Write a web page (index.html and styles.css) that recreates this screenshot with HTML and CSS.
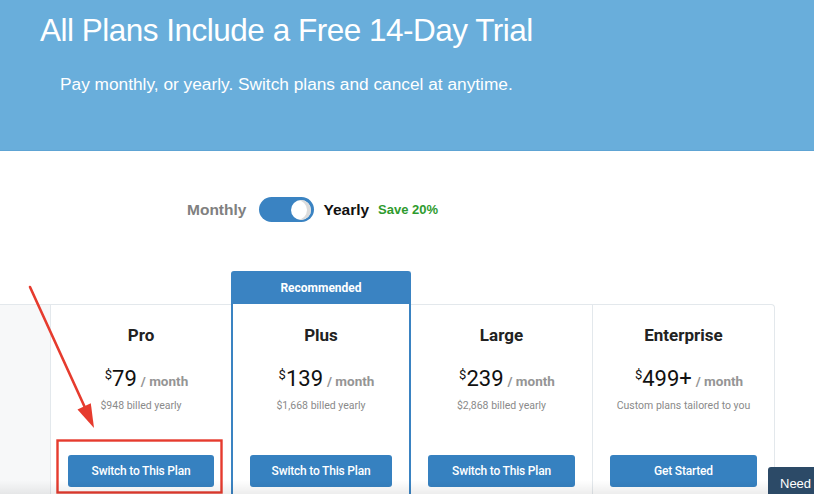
FILE: index.html
```html
<!DOCTYPE html>
<html lang="en">
<head>
<meta charset="utf-8">
<title>Pricing</title>
<link rel="stylesheet" href="styles.css">
</head>
<body>
<header class="hero">
  <h1 class="hero-title">All Plans Include a Free 14-Day Trial</h1>
  <p class="hero-sub">Pay monthly, or yearly. Switch plans and cancel at anytime.</p>
</header>

<section class="billing">
  <span class="billing-label billing-label--off">Monthly</span>
  <span class="switch"><span class="switch-knob"></span></span>
  <span class="billing-label billing-label--on">Yearly</span>
  <span class="save">Save 20%</span>
</section>

<section class="plans">
  <div class="plan plan--side"></div>

  <div class="plan">
    <h2 class="plan-name">Pro</h2>
    <div class="price"><sup class="cur">$</sup><span class="amount">79</span> <span class="per">/ month</span></div>
    <div class="billed">$948 billed yearly</div>
    <a class="btn">Switch to This Plan</a>
  </div>

  <div class="plan plan--featured">
    <div class="ribbon">Recommended</div>
    <h2 class="plan-name">Plus</h2>
    <div class="price"><sup class="cur">$</sup><span class="amount">139</span> <span class="per">/ month</span></div>
    <div class="billed">$1,668 billed yearly</div>
    <a class="btn">Switch to This Plan</a>
  </div>

  <div class="plan">
    <h2 class="plan-name">Large</h2>
    <div class="price"><sup class="cur">$</sup><span class="amount">239</span> <span class="per">/ month</span></div>
    <div class="billed">$2,868 billed yearly</div>
    <a class="btn">Switch to This Plan</a>
  </div>

  <div class="plan plan--last">
    <h2 class="plan-name">Enterprise</h2>
    <div class="price"><sup class="cur">$</sup><span class="amount">499+</span> <span class="per">/ month</span></div>
    <div class="billed">Custom plans tailored to you</div>
    <a class="btn">Get Started</a>
  </div>
</section>

<svg class="annotation" width="814" height="494" viewBox="0 0 814 494" aria-hidden="true">
  <line x1="30" y1="287" x2="87" y2="412" stroke="#e63b2e" stroke-width="2.6" stroke-linecap="round"/>
  <polygon points="94,428 77.5,409.5 90.8,403.3" fill="#e63b2e"/>
  <rect x="57.5" y="440.5" width="164" height="52" fill="none" stroke="#e63b2e" stroke-width="2.4"/>
</svg>

<div class="bottom-fade"></div>
<div class="help">Need Help?</div>
</body>
</html>
```

FILE: styles.css
```css
html, body {
  margin: 0;
  padding: 0;
  width: 814px;
  height: 494px;
  overflow: hidden;
  background: #ffffff;
}

body {
  position: relative;
  font-family: "Liberation Sans", Arial, sans-serif;
}

.hero {
  box-sizing: border-box;
  height: 151px;
  background: #69aedb;
  border-bottom: 1px solid #5ea4d4;
  padding-top: 12px;
  color: #ffffff;
}

.hero-title {
  margin: 0 0 0 40px;
  font-size: 31.5px;
  line-height: 36px;
  font-weight: normal;
  letter-spacing: -0.5px;
}

.hero-sub {
  margin: 26px 0 0 60px;
  font-size: 17.3px;
  line-height: 20px;
}

.billing {
  display: flex;
  align-items: center;
  height: 25px;
  padding: 46px 0 0 187px;
  font-weight: bold;
}

.billing-label {
  font-size: 15.5px;
}

.billing-label--off {
  color: #808080;
  margin-right: 13px;
}

.billing-label--on {
  color: #111111;
  margin-left: 9px;
  font-size: 15.5px;
}

.switch {
  box-sizing: border-box;
  display: flex;
  justify-content: flex-end;
  align-items: center;
  width: 55px;
  height: 25px;
  padding-right: 3px;
  border-radius: 13px;
  background: #3a83c2;
}

.switch-knob {
  width: 20px;
  height: 20px;
  border-radius: 50%;
  background: #ffffff;
  box-shadow: inset -4px 0 0 #dcdcdc;
}

.save {
  margin-left: 9px;
  color: #2e9b2e;
  font-size: 13px;
}

.plans {
  display: grid;
  grid-template-columns: 51px 180px 180px 182px 182px;
  align-items: end;
  margin-top: 49px;
  font-family: Roboto, "Liberation Sans", sans-serif;
}

.plan {
  box-sizing: border-box;
  height: 200px;
  padding: 20px 17px 0;
  border-top: 1px solid #e3e8ec;
  text-align: center;
  background: #ffffff;
}

.plan--side {
  background: #f7f8f9;
  border-right: 1px solid #e3e8ec;
  padding: 0;
}

.plan--featured {
  height: 233px;
  padding: 0 17px 0;
  border: 2px solid #3a83c2;
  border-bottom: none;
  border-radius: 3px 3px 0 0;
}

.plan--featured + .plan {
  border-right: 1px solid #e3e8ec;
}

.plan--last {
  border-right: 1px solid #e3e8ec;
  border-top-right-radius: 4px;
}

.ribbon {
  margin: 0 -17px 21px;
  height: 31px;
  line-height: 30px;
  background: #3a83c2;
  color: #ffffff;
  font-size: 12px;
  font-weight: bold;
}

.plan-name {
  margin: 0;
  font-size: 17px;
  line-height: 20px;
  font-weight: bold;
  color: #222222;
}

.price {
  margin-top: 21px;
  padding-left: 11px;
  line-height: 26px;
  color: #111111;
  white-space: nowrap;
}

.cur {
  font-size: 13px;
  vertical-align: 7px;
  line-height: 0;
}

.amount {
  font-size: 22px;
}

.per {
  font-size: 13.5px;
  font-weight: bold;
  color: #959595;
}

.billed {
  margin-top: 5px;
  font-size: 10.5px;
  line-height: 14px;
  color: #8a8a8a;
  white-space: nowrap;
}

.btn {
  display: block;
  margin-top: 42px;
  height: 32px;
  line-height: 32px;
  border-radius: 3px;
  background: #3681c0;
  color: #ffffff;
  font-size: 12px;
  font-weight: 500;
  letter-spacing: -0.2px;
  text-decoration: none;
}

.annotation {
  position: absolute;
  top: 0;
  left: 0;
  pointer-events: none;
}

.bottom-fade {
  position: absolute;
  left: 0;
  right: 0;
  bottom: 0;
  height: 14px;
  background: linear-gradient(to bottom, rgba(0, 0, 0, 0), rgba(0, 0, 0, 0.07));
  pointer-events: none;
}

.help {
  position: absolute;
  left: 768px;
  top: 467px;
  width: 120px;
  height: 40px;
  box-sizing: border-box;
  padding: 9px 0 0 12px;
  background: #2c4a67;
  border-radius: 3px 0 0 0;
  color: #ffffff;
  font-size: 13px;
  white-space: nowrap;
}
```
